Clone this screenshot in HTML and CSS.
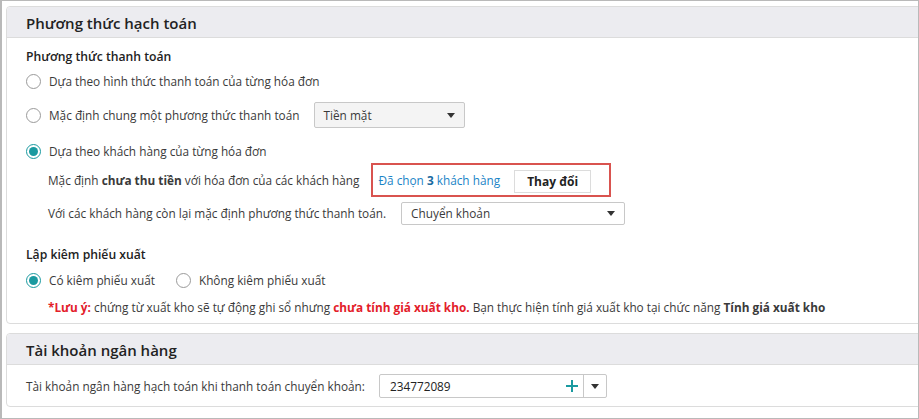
FILE: index.html
```html
<!DOCTYPE html>
<html lang="vi">
<head>
    <meta charset="UTF-8">
    <title>Tùy chọn hạch toán</title>
    <link rel="stylesheet" href="styles.css">
</head>
<body>
<div class="frame">

    <div class="card">
        <div class="card-head">Phương thức hạch toán</div>
        <div class="card-body">
            <div class="row group-title">Phương thức thanh toán</div>

            <label class="row r1"><span class="radio"></span>Dựa theo hình thức thanh toán của từng hóa đơn</label>

            <div class="row r2">
                <label class="opt"><span class="radio"></span>Mặc định chung một phương thức thanh toán</label>
                <div class="select sel-cash"><span>Tiền mặt</span><span class="caret"></span></div>
            </div>

            <label class="row r3"><span class="radio on"></span>Dựa theo khách hàng của từng hóa đơn</label>

            <div class="row sub s1">
                <span>Mặc định <b>chưa thu tiền</b> với hóa đơn của các khách hàng</span>
                <div class="picked">
                    <a class="link">Đã chọn <b>3</b> khách hàng</a>
                    <button class="btn">Thay đổi</button>
                </div>
            </div>

            <div class="row sub s2">
                <span>Với các khách hàng còn lại mặc định phương thức thanh toán.</span>
                <div class="select sel-transfer"><span>Chuyển khoản</span><span class="caret"></span></div>
            </div>

            <div class="row group-title g2">Lập kiêm phiếu xuất</div>

            <div class="row r4">
                <label class="opt"><span class="radio on"></span>Có kiêm phiếu xuất</label>
                <label class="opt opt-2"><span class="radio"></span>Không kiêm phiếu xuất</label>
            </div>

            <div class="row sub note">
                <span><b class="red">*Lưu ý:</b> chứng từ xuất kho sẽ tự động ghi sổ nhưng <b class="red">chưa tính giá xuất kho.</b> Bạn thực hiện tính giá xuất kho tại chức năng <b>Tính giá xuất kho</b></span>
            </div>
        </div>
    </div>

    <div class="card card-bank">
        <div class="card-head">Tài khoản ngân hàng</div>
        <div class="card-body bank-body">
            <div class="row">
                <span>Tài khoản ngân hàng hạch toán khi thanh toán chuyển khoản:</span>
                <div class="combo">
                    <span class="combo-val">234772089</span>
                    <svg class="plus" width="12" height="12" viewBox="0 0 12 12"><path d="M6 0v12M0 6h12" stroke="#1a9aa0" stroke-width="2"/></svg>
                    <span class="combo-drop"><span class="caret"></span></span>
                </div>
            </div>
        </div>
    </div>

</div>
</body>
</html>
```

FILE: styles.css
```css
body {
    margin: 0;
    font-family: "Open Sans", "Noto Sans", sans-serif;
    font-size: 11.8px;
    color: #3a3a3a;
}
.frame {
    width: 919px;
    height: 419px;
    box-sizing: border-box;
    border: 1px solid #b9b9b9;
    border-left-width: 2px;
    padding: 5px 0 0 4px;
    overflow: hidden;
}
.card {
    border: 1px solid #dcdcdc;
    border-radius: 4px;
    margin-right: -8px;
    background: #fff;
}
.card-bank {
    margin-top: 9px;
}
.card-head {
    height: 30px;
    line-height: 32px;
    padding-left: 19px;
    background: #ececf0;
    border-bottom: 1px solid #dcdcdc;
    border-radius: 4px 4px 0 0;
    font-size: 15px;
    font-weight: 600;
    color: #222;
}
.card-body {
    padding: 8px 19px 6px;
}
.row {
    display: flex;
    align-items: center;
    height: 20px;
    white-space: nowrap;
}
.group-title {
    font-size: 12.2px;
    font-weight: 600;
    color: #222;
}
.g2 { margin-top: 20px; }
.r1 { margin-top: 5px; }
.r2 { margin-top: 11px; height: 26px; }
.r3 { margin-top: 13px; }
.r4 { margin-top: 6px; }
.note { margin-top: 7px; }
.sub { padding-left: 22px; }
.s1 { margin-top: 2px; height: 34px; }
.s2 { margin-top: 5px; height: 22px; }

.opt {
    display: flex;
    align-items: center;
}
.opt-2 { margin-left: 21px; }

.radio {
    width: 13px;
    height: 13px;
    border: 1px solid #9a9a9a;
    border-radius: 50%;
    margin-right: 8px;
    flex: none;
    position: relative;
}
.radio.on {
    border-color: #1a9aa0;
}
.radio.on::after {
    content: "";
    position: absolute;
    left: 2px;
    top: 2px;
    width: 9px;
    height: 9px;
    border-radius: 50%;
    background: #1a9aa0;
}

.select {
    display: flex;
    align-items: center;
    justify-content: space-between;
    box-sizing: border-box;
    border: 1px solid #c8c8c8;
    border-radius: 2px;
    padding: 0 9px 0 9px;
    background: #fff;
}
.sel-cash {
    margin-left: 14px;
    width: 151px;
    height: 26px;
    background: #f4f4f4;
}
.sel-transfer {
    margin-left: 15px;
    width: 224px;
    height: 23px;
}
.caret {
    width: 0;
    height: 0;
    border-left: 4px solid transparent;
    border-right: 4px solid transparent;
    border-top: 5px solid #333;
}

.picked {
    display: flex;
    align-items: center;
    box-sizing: border-box;
    height: 34px;
    margin-left: 12px;
    border: 2px solid #d9534f;
    padding: 0 18px 0 5px;
}
.link {
    color: #1a84c6;
}
.link b { color: #1a6aa0; }
.btn {
    margin-left: 14px;
    margin-top: 3px;
    height: 23px;
    width: 77px;
    border: 1px solid #dcdcdc;
    background: #fff;
    font-family: inherit;
    font-size: 12px;
    font-weight: 700;
    color: #222;
    padding: 0;
}

.red { color: #e3202a; }
.note b { font-weight: 700; }

.bank-body {
    padding: 9px 19px 8px;
}
.bank-body .row { height: 24px; }
.combo {
    display: flex;
    align-items: center;
    box-sizing: border-box;
    margin-left: 14px;
    width: 228px;
    height: 24px;
    border: 1px solid #c8c8c8;
    border-radius: 2px;
}
.combo-val {
    flex: 1;
    padding-left: 10px;
    color: #222;
}
.plus {
    margin-right: 5px;
}
.combo-drop {
    width: 22px;
    height: 100%;
    border-left: 1px solid #c8c8c8;
    display: flex;
    align-items: center;
    justify-content: center;
}
```
